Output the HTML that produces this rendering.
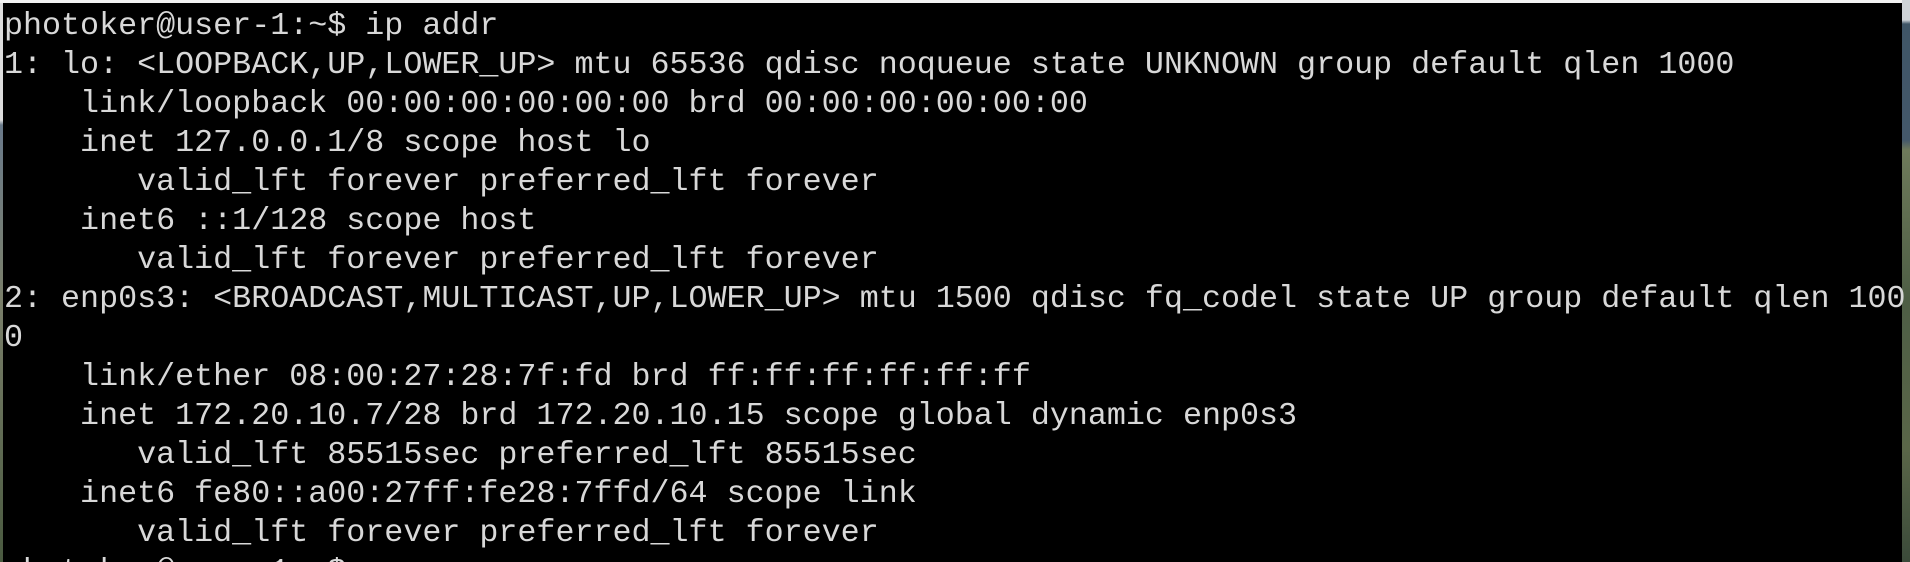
<!DOCTYPE html>
<html><head><style>
html,body{margin:0;padding:0;width:1910px;height:562px;overflow:hidden;background:#000;}
#root{position:relative;width:1910px;height:562px;overflow:hidden;background:#000;}
.wp{position:absolute;left:1902px;top:0;width:8px;height:562px;background:linear-gradient(#cfd4d8 0,#cfd4d8 20px,#3f5566 24px,#44586a 140px,#6e7a5a 150px,#4e5e45 300px,#5a6648 450px,#3b4a3a 562px);}
.lw{position:absolute;left:0;top:0;width:3px;height:562px;background:linear-gradient(#ddd 0,#ddd 120px,#6a7a8a 125px,#7a7f6a 300px,#4a5a40 562px);}
.top{position:absolute;left:0;top:0;width:1902px;height:3px;background:#f2f2f2;}
pre{position:absolute;left:4px;top:7px;height:555px;overflow:hidden;margin:0;font-family:"Liberation Mono",monospace;font-size:31.7px;line-height:39px;color:#d8d8d8;white-space:pre;}
</style></head><body><div id="root">
<div class="lw"></div><div class="wp"></div><div class="top"></div>
<pre>photoker@user-1:~$ ip addr
1: lo: &lt;LOOPBACK,UP,LOWER_UP&gt; mtu 65536 qdisc noqueue state UNKNOWN group default qlen 1000
    link/loopback 00:00:00:00:00:00 brd 00:00:00:00:00:00
    inet 127.0.0.1/8 scope host lo
       valid_lft forever preferred_lft forever
    inet6 ::1/128 scope host
       valid_lft forever preferred_lft forever
2: enp0s3: &lt;BROADCAST,MULTICAST,UP,LOWER_UP&gt; mtu 1500 qdisc fq_codel state UP group default qlen 100
0
    link/ether 08:00:27:28:7f:fd brd ff:ff:ff:ff:ff:ff
    inet 172.20.10.7/28 brd 172.20.10.15 scope global dynamic enp0s3
       valid_lft 85515sec preferred_lft 85515sec
    inet6 fe80::a00:27ff:fe28:7ffd/64 scope link
       valid_lft forever preferred_lft forever
photoker@user-1:~$</pre>
</div></body></html>
